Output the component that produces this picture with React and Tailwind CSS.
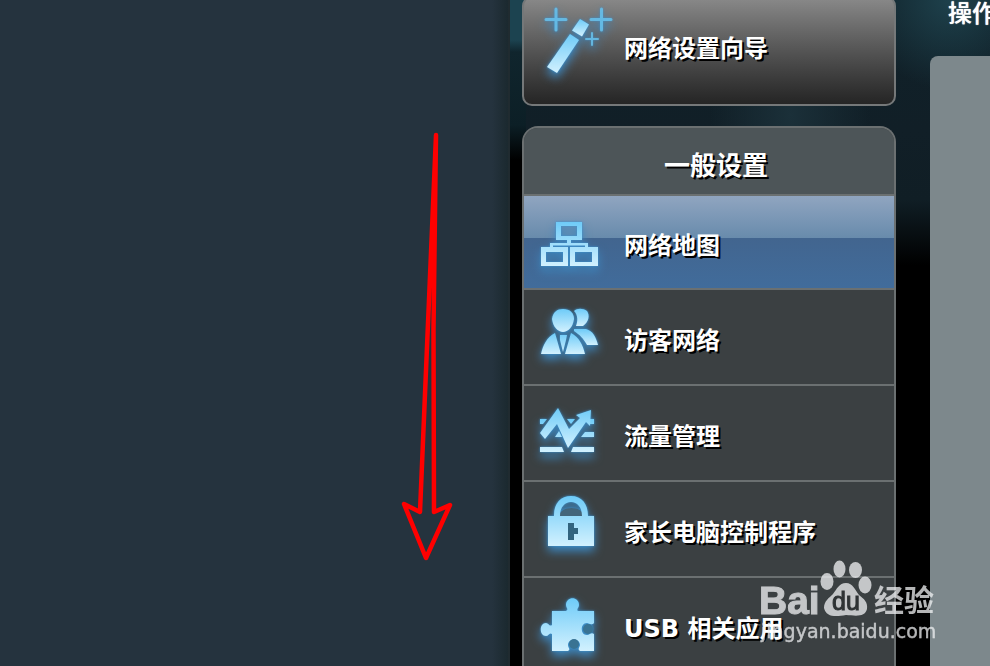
import React, { useState } from "react";

const Glyph = ({ children }) => (
  <svg
    viewBox="0 0 60 80"
    aria-hidden="true"
    fill="url(#glow)"
    className="h-20 w-[60px] flex-none overflow-visible [filter:drop-shadow(0_0_1px_#3d93d0)_drop-shadow(0_5px_5px_#3d86bd)]"
  >
    {children}
  </svg>
);

const WandIcon = () => (
  <Glyph>
    <path d="M40 12 49 17.500 42 29.500 32 23.500Z" />
    <path d="M30 27 39 33 17 66 7 60Z" />
    <g stroke="#6cc5ef" strokeOpacity="0.8" fill="none" strokeLinecap="round">
      <path d="M6 12.500H26M16 2V23" strokeWidth="3" />
      <path d="M51 12.500H71M61.500 2V23" strokeWidth="3" />
      <path d="M46 32H58M52 26V38" strokeWidth="2" />
    </g>
  </Glyph>
);

const MapIcon = () => (
  <Glyph>
    <path
      fillRule="evenodd"
      d="M16 20H42V38H31V41H48V45H58V64H30V45H45V43.500H13V45H28V64H1V45H10V41H27V38H16ZM21 24V34H37V24ZM6 50V60H23V50ZM35 50V60H52V50Z"
    />
  </Glyph>
);

const GuestIcon = () => (
  <Glyph>
    <path d="M34 14C37 11 43 11 47 14C50 18 49 25 43 29H36C38 24 38 18 34 14Z" />
    <path d="M34 32H46C53 34 56 40 58 48H47C43 41 40 38 34 34Z" />
    <path d="M12 22C13 15 17 12 23 12C30 12 34 16 34 22C33 30 28 35 23 35C18 35 13 30 12 22Z" />
    <path d="M15 36C7 40 3 48 1 57H21ZM31 36 25 57H45C43 48 39 40 31 36ZM20 38H27L26 43 23 55 20 43Z" />
  </Glyph>
);

const TrafficIcon = () => (
  <Glyph>
    <path d="M0 26H7L3 31H0ZM27 26H35L31 31ZM50 26H54V31H49ZM15 44 19 38 22 44ZM41 44 45 39H54V44ZM0 54H22L24 59H0ZM33 54H54V59H31Z" />
    <path d="M0 40 18 15 29 36 40 25 36 22 51 17 50 33 46 29 28 55 17 31 5 46Z" />
  </Glyph>
);

const LockIcon = () => (
  <Glyph>
    <path d="M19 28C19 16 44 16 44 28Z" fill="#43657a" />
    <path
      fillRule="evenodd"
      d="M14 26C14 14 21 7 31 7C42 7 48 15 48 27H54V57H8V27H14ZM20 27H42C42 18 37 13 31 13C25 13 20 18 20 27ZM28 34V51H34V45H38V39H34V34Z"
    />
    <path d="M28 34H34V39H38V45H34V51H28Z" fill="#32647f" />
  </Glyph>
);

const PuzzleIcon = () => (
  <Glyph>
    <path d="M12 26H26C29 24 26 23 26 20C26 11 39 11 39 20C39 23 36 24 38 26H54V38C51 41 49 38 47 38C40 38 40 50 47 50C50 50 51 47 54 49V66H40C37 64 40 62 40 60C40 53 28 53 28 60C28 63 31 64 28 66H12V49C9 47 9 51 6 51C-1 51 -1 38 6 38C9 38 9 42 12 40Z" />
    <circle cx="34" cy="59" r="5" fill="#397393" />
    <circle cx="48" cy="44" r="5" fill="#397393" />
  </Glyph>
);

const menu = [
  { label: "网络地图", Icon: MapIcon },
  { label: "访客网络", Icon: GuestIcon },
  { label: "流量管理", Icon: TrafficIcon },
  { label: "家长电脑控制程序", Icon: LockIcon },
  { label: "USB 相关应用", Icon: PuzzleIcon },
];

const Arrow = () => (
  <svg
    viewBox="0 0 56 432"
    aria-hidden="true"
    className="absolute top-[130px] right-[52px] h-[432px] w-14"
  >
    <path
      d="M36 5 20 382 4 374 26 428 50 375 34 382 33.500 200Z"
      fill="none"
      stroke="#ff0000"
      strokeWidth="4.500"
      strokeLinejoin="round"
    />
  </svg>
);

const Watermark = () => (
  <div className="pointer-events-none absolute right-[50px] bottom-5">
    <svg
      viewBox="0 0 180 86"
      className="h-[86px] w-[180px] overflow-visible opacity-75"
      fill="#f2f3f5"
    >
      <ellipse cx="67" cy="21.500" rx="6.500" ry="8.500" />
      <ellipse cx="79.500" cy="9" rx="6" ry="8.500" />
      <ellipse cx="95.500" cy="10" rx="6.500" ry="8" />
      <ellipse cx="105" cy="25" rx="6.500" ry="8.500" />
      <path d="M86 23C93 23 95 30 99 35C104 39 108 42 107 49C105 57 97 56 86 55C75 57 66 57 64 48C64 41 69 38 73 34C77 29 79 23 86 23Z" />
      <text
        x="-1"
        y="54"
        fontSize="39"
        fontWeight="700"
        stroke="#f2f3f5"
        fontFamily="Liberation Sans, sans-serif"
      >
        Bai
      </text>
      <text
        x="86"
        y="50"
        fontSize="25"
        textAnchor="middle"
        fill="#2b2f31"
        stroke="#2b2f31"
        fontFamily="Liberation Sans, sans-serif"
      >
        du
      </text>
      <text x="114" y="51" fontSize="30" fontWeight="700" fontFamily="Noto Sans CJK SC, sans-serif">
        经验
      </text>
      <text
        x="1"
        y="78"
        fontSize="19"
        stroke="#f2f3f5"
        strokeWidth="0.4"
        fontFamily="DejaVu Sans, sans-serif"
      >
        jingyan.baidu.com
      </text>
    </svg>
  </div>
);

const App = () => {
  const [active, setActive] = useState(0);

  return (
    <div className="relative flex h-screen overflow-hidden bg-black font-['DejaVu_Sans','Noto_Sans_CJK_SC',sans-serif] text-white">
      {/* Shared gradient for the glowing glyphs */}
      <svg aria-hidden="true" className="absolute h-0 w-0">
        <defs>
          <linearGradient id="glow" x1="0" y1="0" x2="0" y2="1">
            <stop offset="0" stopColor="#6ecbf8" />
            <stop offset="1" stopColor="#d2f1fe" />
          </linearGradient>
        </defs>
      </svg>

      <div className="relative flex-1 border-r-2 border-[#202b30] bg-[#25333e]">
        <div className="ml-auto h-full w-4 bg-linear-to-r from-[#25333e] to-[#1b292f]" />
        <Arrow />
      </div>

      <div className="flex flex-none pl-3 [background:linear-gradient(#1c4350_0,#1c4350_40px,#10252d_52px,#0c1f26_125px,#000_160px)_0_0/16px_100%_no-repeat,radial-gradient(circle_at_440px_0,#1e414c_0,#1e414c00_90px),radial-gradient(ellipse_at_280px_115px,#1b3039_0,#1b303900_80px),linear-gradient(#102129_0,#111f27_130px,#101e25_200px,#000_265px)]">
        <nav className="w-[374px]">
          <button className="-mt-1 flex h-[110px] w-full items-center gap-6 rounded-[10px] border-2 border-[#757879] bg-linear-to-b from-[#898989] to-[#252525] pb-2 pl-4 text-left text-2xl font-bold [text-shadow:2px_2px_0_#000]">
            <WandIcon />
            <span className="pt-1">网络设置向导</span>
          </button>

          <div className="mt-5 rounded-t-2xl border-2 border-b-0 border-[#6b7071] bg-[#3b4042]">
            <h2 className="h-[68px] rounded-t-[14px] border-b-2 border-[#6b7071] bg-[#4d5558] pt-5 pl-[14px] text-center text-[26px] leading-9 font-bold [text-shadow:2px_2px_0_#000]">
              一般设置
            </h2>
            <ul>
              {menu.map(({ label, Icon }, index) => (
                <li key={label}>
                  <button
                    onClick={() => setActive(index)}
                    className={`flex w-full items-center gap-6 border-b-2 border-[#6b7071] pl-4 text-left text-2xl font-bold [text-shadow:2px_2px_0_#000] ${
                      active === index
                        ? "h-[94px] bg-[linear-gradient(#90a5c0_0,#688bac_42px,#42658f_42px,#416c9b_100%)]"
                        : "h-24"
                    }`}
                  >
                    <Icon />
                    <span className="pt-2">{label}</span>
                  </button>
                </li>
              ))}
            </ul>
          </div>
        </nav>

        <main className="ml-[34px] flex w-[60px] flex-col overflow-hidden">
          <div className="h-14 flex-none pl-[18px] text-2xl leading-7 font-medium whitespace-nowrap [text-shadow:0_0_1px_#fff]">
            操作模式
          </div>
          <div className="flex-1 rounded-tl-lg bg-[#7d888c]" />
        </main>
      </div>

      <Watermark />
    </div>
  );
};

export default App;
